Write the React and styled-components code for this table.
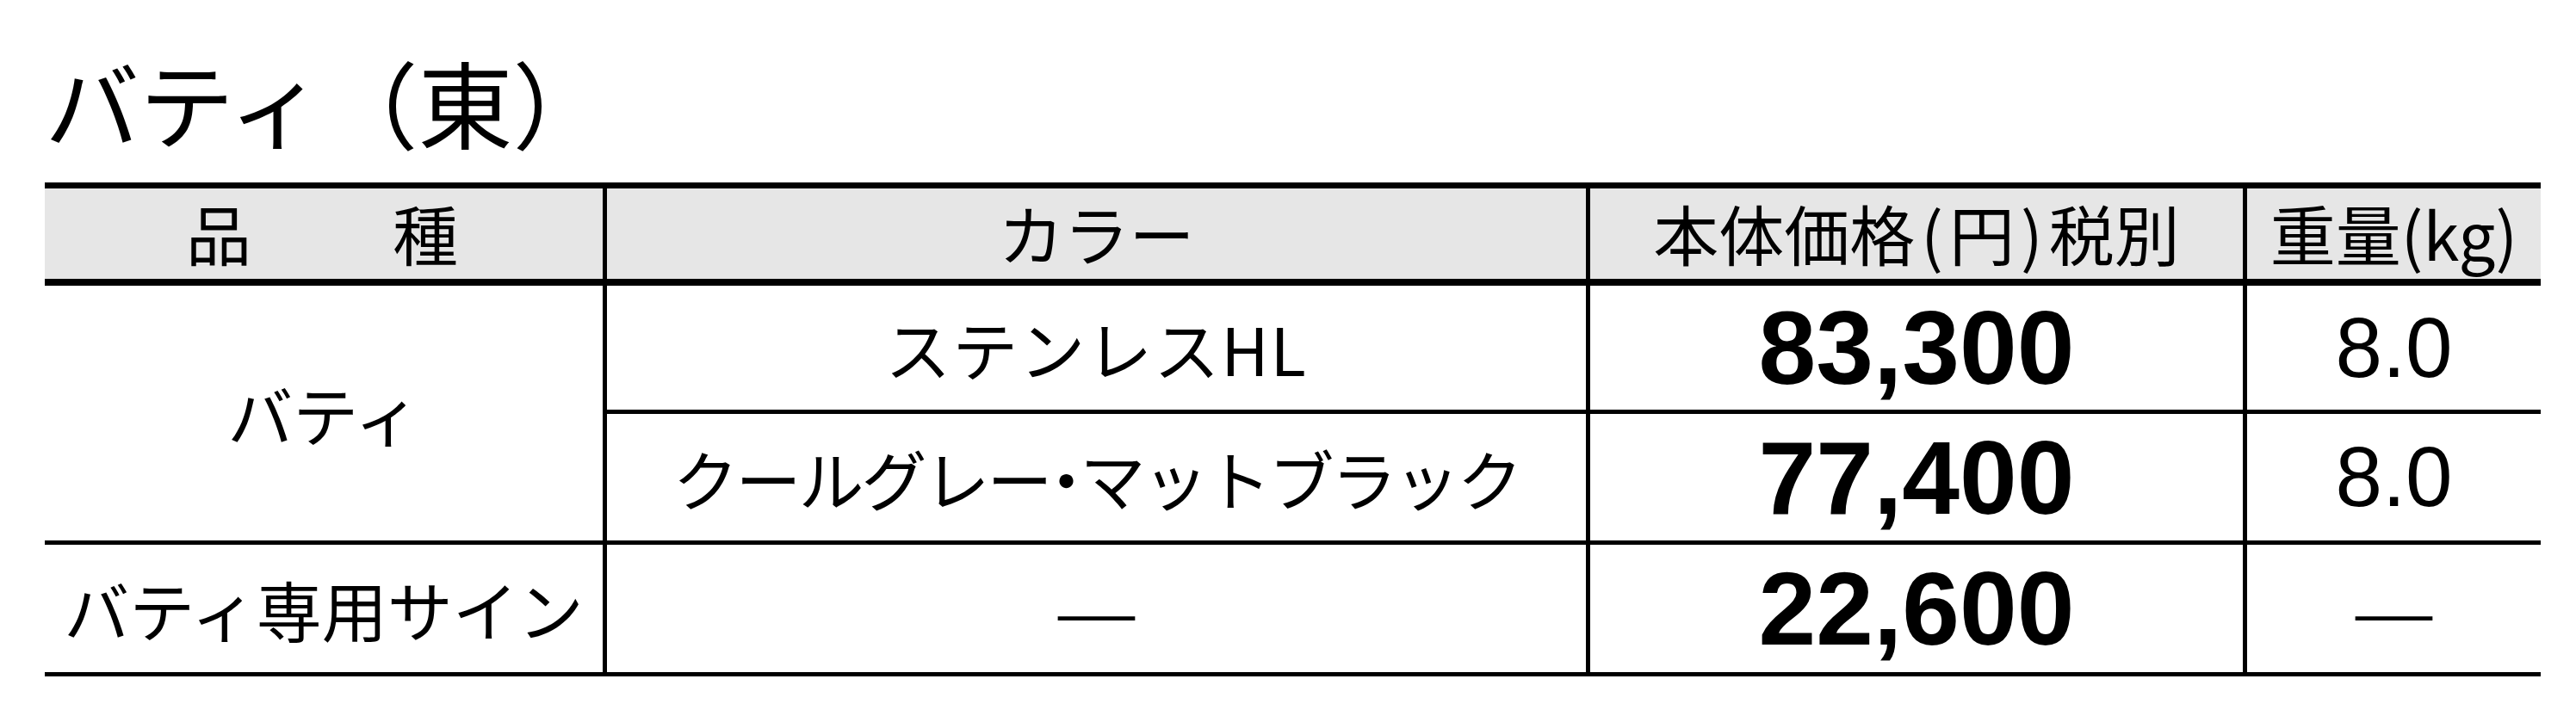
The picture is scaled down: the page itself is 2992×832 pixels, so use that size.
import styled, {createGlobalStyle} from "styled-components";

const GlobalStyle = createGlobalStyle`
    body {
        margin: 0;
        background: #ffffff;
        color: #000000;
        font-family: "Noto Sans CJK JP", "Noto Sans", sans-serif;
    }
`;

const Page = styled.div`
    padding: 52px 0 0 52px;
    width: 2899px;
`;

const Title = styled.h1`
    margin: 0 0 30px 0;
    font-size: 110px;
    line-height: 130px;
    font-weight: 400;
`;

const Grid = styled.div`
    display: grid;
    grid-template-columns: 653px 1142px 763px 341px;
    grid-template-rows: 113px 149px 152px 148px;
    border-top: 7px solid #000;
    border-bottom: 5px solid #000;
`;

const Cell = styled.div`
    box-sizing: border-box;
    display: flex;
    align-items: center;
    justify-content: center;
    white-space: nowrap;
    font-size: 76px;
    border-right: ${props => props.last ? "none" : "5px solid #000"};
    border-bottom: ${props => props.noLine ? "none" : "5px solid #000"};
    grid-row: ${props => props.span ? `span ${props.span}` : "auto"};
    letter-spacing: ${props => props.spacing || "0"};
`;

const HeadCell = styled(Cell)`
    background: #e6e6e6;
    border-bottom: 8px solid #000;
    padding-bottom: 4px;
`;

const Paren = styled.span`
    margin: 0 7px;
`;

// half-width form of the middle dot, as in the printed table
const Dot = styled.span`
    font-feature-settings: "halt";
`;

const Price = styled.span`
    font-family: "Liberation Sans", Arial, sans-serif;
    font-weight: 700;
    font-size: 120px;
`;

const Weight = styled.span`
    font-family: "Liberation Sans", Arial, sans-serif;
    font-size: 98px;
`;

const Dash = styled.span`
    display: inline-block;
    font-size: 112px;
    transform: scaleY(0.7);
`;

const rows = [
    {color: "ステンレスHL", price: "83,300", weight: "8.0", spacing: "2px"},
    {color: <>クールグレー<Dot>・</Dot>マットブラック</>, price: "77,400", weight: "8.0", spacing: "-3px"},
];

export default function App() {
    return (
        <Page>
            <GlobalStyle/>
            <Title>バティ（東）</Title>
            <Grid>
                <HeadCell spacing="4px">品　　種</HeadCell>
                <HeadCell>カラー</HeadCell>
                <HeadCell>本体価格<Paren>(</Paren>円<Paren>)</Paren>税別</HeadCell>
                <HeadCell last>重量(kg)</HeadCell>

                <Cell span={2}>バティ</Cell>
                {rows.map((row) => [
                    <Cell key={row.price + "c"} spacing={row.spacing}>{row.color}</Cell>,
                    <Cell key={row.price + "p"}><Price>{row.price}</Price></Cell>,
                    <Cell key={row.price + "w"} last><Weight>{row.weight}</Weight></Cell>,
                ])}

                <Cell noLine>バティ専用サイン</Cell>
                <Cell noLine><Dash>—</Dash></Cell>
                <Cell noLine><Price>22,600</Price></Cell>
                <Cell noLine last><Dash>—</Dash></Cell>
            </Grid>
        </Page>
    );
}
